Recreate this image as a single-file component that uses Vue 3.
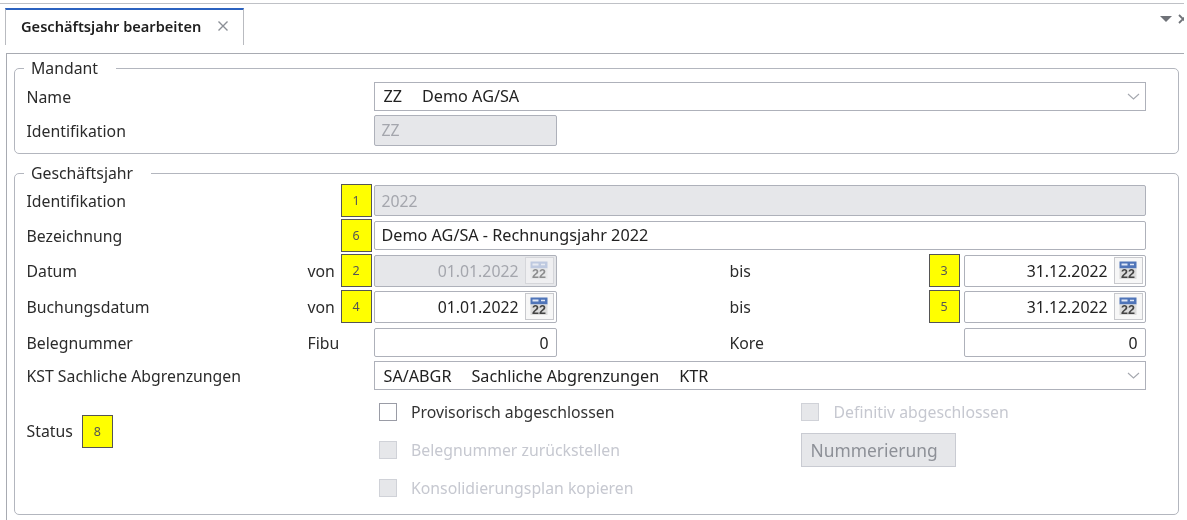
<script setup>
const topRows = [
  { label: 'Name' },
  { label: 'Identifikation' },
]
</script>

<template>
  <div class="page">
    <div class="tabstrip">
      <div class="tab">
        <span class="tab-title">Geschäftsjahr bearbeiten</span>
        <svg class="tab-close" width="12" height="12" viewBox="0 0 12 12"><path d="M1.5 1.5l9 9M10.5 1.5l-9 9" stroke="#8b8f96" stroke-width="1.4" fill="none"/></svg>
      </div>
      <div class="tools">
        <svg width="12" height="6" viewBox="0 0 12 6"><path d="M0 0h12L6 6z" fill="#6f7278"/></svg>
        <svg class="tool-x" width="10" height="10" viewBox="0 0 10 10"><path d="M1 1l8 8M9 1l-8 8" stroke="#6f7278" stroke-width="1.8" fill="none"/></svg>
      </div>
    </div>

    <div class="panel">
      <fieldset class="group group-a">
        <legend>Mandant</legend>
        <div class="grid">
          <div class="row-a1 label">{{ topRows[0].label }}</div>
          <div class="field combo span-wide row-a1">
            <span class="combo-text">ZZ<i class="sp-b"></i>Demo AG/SA</span>
            <svg class="chev" width="13" height="7" viewBox="0 0 13 7"><path d="M1 1l5.5 5L12 1" stroke="#a5a8af" stroke-width="1.1" fill="none"/></svg>
          </div>
          <div class="row-a2 label">{{ topRows[1].label }}</div>
          <div class="field disabled f1 row-a2 tall">ZZ</div>
        </div>
      </fieldset>

      <fieldset class="group group-b">
        <legend>Geschäftsjahr</legend>
        <div class="grid rows-b">
          <div class="label">Identifikation</div>
          <div class="mark m1">1</div>
          <div class="field disabled span-wide tall">2022</div>

          <div class="label">Bezeichnung</div>
          <div class="mark m1">6</div>
          <div class="field span-wide wide-text">Demo AG/SA - Rechnungsjahr 2022</div>

          <div class="label">Datum</div>
          <div class="pre">von</div>
          <div class="mark m1">2</div>
          <div class="field date disabled f1">
            <span>01.01.2022</span>
            <span class="cal off">
              <svg width="18" height="19" viewBox="0 0 18 19"><rect x="0.5" y="0.5" width="17" height="7" fill="#9fb2d8"/><path d="M2.5 3.5h6" stroke="#e8eefa" stroke-width="2"/><path d="M11 3.5h4" stroke="#e8eefa" stroke-width="1.5"/><rect x="0.5" y="7.5" width="17" height="10.5" fill="#e9e9e9"/><text x="9" y="17" text-anchor="middle" class="cal-num">22</text></svg>
            </span>
          </div>
          <div class="bis">bis</div>
          <div class="mark m2">3</div>
          <div class="field date f2">
            <span>31.12.2022</span>
            <span class="cal">
              <svg width="18" height="19" viewBox="0 0 18 19"><rect x="0.5" y="0.5" width="17" height="7" fill="#4f74b8"/><path d="M2.5 3.5h6" stroke="#dfe7f7" stroke-width="2"/><path d="M11 3.5h4" stroke="#dfe7f7" stroke-width="1.5"/><rect x="0.5" y="7.5" width="17" height="10.5" fill="#dcdcdc"/><text x="9" y="17" text-anchor="middle" class="cal-num">22</text></svg>
            </span>
          </div>

          <div class="label">Buchungsdatum</div>
          <div class="pre">von</div>
          <div class="mark m1">4</div>
          <div class="field date f1">
            <span>01.01.2022</span>
            <span class="cal">
              <svg width="18" height="19" viewBox="0 0 18 19"><rect x="0.5" y="0.5" width="17" height="7" fill="#4f74b8"/><path d="M2.5 3.5h6" stroke="#dfe7f7" stroke-width="2"/><path d="M11 3.5h4" stroke="#dfe7f7" stroke-width="1.5"/><rect x="0.5" y="7.5" width="17" height="10.5" fill="#dcdcdc"/><text x="9" y="17" text-anchor="middle" class="cal-num">22</text></svg>
            </span>
          </div>
          <div class="bis">bis</div>
          <div class="mark m2">5</div>
          <div class="field date f2">
            <span>31.12.2022</span>
            <span class="cal">
              <svg width="18" height="19" viewBox="0 0 18 19"><rect x="0.5" y="0.5" width="17" height="7" fill="#4f74b8"/><path d="M2.5 3.5h6" stroke="#dfe7f7" stroke-width="2"/><path d="M11 3.5h4" stroke="#dfe7f7" stroke-width="1.5"/><rect x="0.5" y="7.5" width="17" height="10.5" fill="#dcdcdc"/><text x="9" y="17" text-anchor="middle" class="cal-num">22</text></svg>
            </span>
          </div>

          <div class="label">Belegnummer</div>
          <div class="pre">Fibu</div>
          <div class="field num f1">0</div>
          <div class="bis">Kore</div>
          <div class="field num f2">0</div>

          <div class="label">KST Sachliche Abgrenzungen</div>
          <div class="field combo span-wide">
            <span class="combo-text">SA/ABGR<i class="sp-b"></i>Sachliche Abgrenzungen<i class="sp-b"></i>KTR</span>
            <svg class="chev" width="13" height="7" viewBox="0 0 13 7"><path d="M1 1l5.5 5L12 1" stroke="#a5a8af" stroke-width="1.1" fill="none"/></svg>
          </div>
        </div>

        <div class="status">
          <div class="status-label">
            <span>Status</span>
            <div class="mark m8">8</div>
          </div>
          <label class="check c-left r1"><i class="box"></i><span>Provisorisch abgeschlossen</span></label>
          <label class="check c-right r1 off"><i class="box"></i><span>Definitiv abgeschlossen</span></label>
          <label class="check c-left r2 off"><i class="box"></i><span>Belegnummer zurückstellen</span></label>
          <button class="btn c-right r2" type="button" disabled>Nummerierung</button>
          <label class="check c-left r3 off"><i class="box"></i><span>Konsolidierungsplan kopieren</span></label>
        </div>
      </fieldset>
    </div>
  </div>
</template>

<style scoped>
.page {
  width: 1184px;
  height: 520px;
  overflow: hidden;
  box-sizing: border-box;
  padding-top: 3px;
  font-family: "Noto Sans", "Open Sans", sans-serif;
  font-size: 15.8px;
  color: #2b2b2b;
  background: #fff;
  filter: blur(0.35px);
}
.tabstrip {
  display: flex;
  justify-content: space-between;
  height: 42px;
  padding: 4px 0 0 5px;
  box-sizing: border-box;
  border-top: 1px solid #bfc1c6;
  margin-bottom: 8px;
}
.tab {
  width: 239px;
  box-sizing: border-box;
  display: flex;
  align-items: center;
  padding: 0 14px 3px 15px;
  justify-content: space-between;
  border: 1px solid #b9bbc0;
  border-top: 2px solid #2b62c0;
  border-bottom: 0;
}
.tab-title { font-weight: 600; font-size: 14.6px; color: #1e1e1e; white-space: nowrap; }
.tools { display: flex; align-items: center; gap: 6px; height: 18px; margin-right: -4px; padding-top: 2px; }
.tool-x { margin-top: -1px; }
.panel {
  margin-left: 6px;
  height: 480px;
  border-top: 1px solid #a8abb2;
  border-left: 1px solid #a8abb2;
  padding: 5px 5px 0 7px;
}
.group {
  margin: 0;
  padding: 0;
  min-width: 0;
  border: 1.5px solid #b3b6be;
  border-radius: 5px;
}
.group legend {
  margin-left: 9px;
  padding: 0 18px 0 7px;
  line-height: 18px;
}
.group-a { height: 93px; margin-bottom: 10px; }
.group-b { height: 349px; }
.grid {
  display: grid;
  grid-template-columns: 281px 33px 33px 183px 173px 199px 35px 182px;
  padding-left: 11.5px;
}
.group-a .grid { grid-template-rows: 30px 38px; margin-top: 4px; }
.rows-b { grid-template-rows: 34px 35px 36px 36px 36px 30px; margin-top: 1.5px; }
.label { grid-column: 1; align-self: center; white-space: nowrap; padding-top: 1.5px; }
.row-a1 { grid-row: 1; }
.row-a2 { grid-row: 2; }
.pre { grid-column: 2; align-self: center; }
.bis { grid-column: 6; align-self: center; }
.mark {
  background: #ffff00;
  border: 1px solid #555;
  box-sizing: border-box;
  width: 31px;
  height: 33px;
  display: flex;
  align-items: center;
  justify-content: center;
  font-size: 12.5px;
  color: #555;
  align-self: center;
}
.m1 { grid-column: 3; }
.m2 { grid-column: 7; }
.field {
  box-sizing: border-box;
  height: 29px;
  border: 1.5px solid #aeb1ba;
  border-radius: 2px;
  background: #fff;
  display: flex;
  align-items: center;
  padding: 0 7px;
  align-self: center;
  white-space: nowrap;
  color: #222;
}
.tall { height: 31px; }
.wide-text { font-size: 16.2px; }
.span-wide { grid-column: 4 / 9; }
.f1 { grid-column: 4; }
.f2 { grid-column: 8; }
.disabled { background: #e6e7ea; color: #a4a6ad; }
.combo { justify-content: space-between; padding: 0 5px 0 9px; border-radius: 0; font-size: 16.2px; }
.combo-text { display: inline-flex; }
.sp-b { display: inline-block; width: 20px; }
.chev { flex: none; }
.date { height: 32px; justify-content: flex-end; padding: 0 2px 0 0; gap: 6px; }
.num { justify-content: flex-end; padding-right: 7px; }
.cal {
  box-sizing: border-box;
  width: 29px;
  height: 27px;
  display: flex;
  align-items: center;
  justify-content: center;
  border: 1px solid #c8c9cd;
  background: #f7f7f7;
}
.cal.off { opacity: 0.55; }
.cal-num { font-size: 12.5px; font-weight: 700; fill: #444; font-family: "Liberation Sans", sans-serif; }
.status {
  display: grid;
  grid-template-columns: 348.5px 425.5px 345px;
  grid-template-rows: 38px 38px 38px;
  padding-left: 11.5px;
  margin-top: 2px;
}
.status-label {
  grid-column: 1;
  grid-row: 1 / 3;
  display: flex;
  align-items: center;
  gap: 9px;
  padding-top: 1.5px;
}
.check { display: flex; align-items: center; gap: 14px; align-self: center; padding-left: 4px; white-space: nowrap; color: #333; }
.c-left { grid-column: 2; }
.c-right { grid-column: 3; }
.r1 { grid-row: 1; }
.r2 { grid-row: 2; }
.r3 { grid-row: 3; }
.check.c-right { padding-left: 0; gap: 15px; }
.box {
  box-sizing: border-box;
  width: 18px;
  height: 18px;
  flex: none;
  border: 1.5px solid #9a9ca6;
  background: #fff;
}
.off { color: #c6c8d0; }
.off .box { background: #e6e7ea; border-color: #d0d2d8; }
.btn {
  box-sizing: border-box;
  width: 155px;
  height: 34px;
  justify-self: start;
  align-self: center;
  border: 1px solid #c9cbd2;
  background: #e6e7ea;
  color: #8d9097;
  font: inherit;
  font-size: 17.4px;
  padding: 0 0 0 9px;
  text-align: left;
}
</style>
